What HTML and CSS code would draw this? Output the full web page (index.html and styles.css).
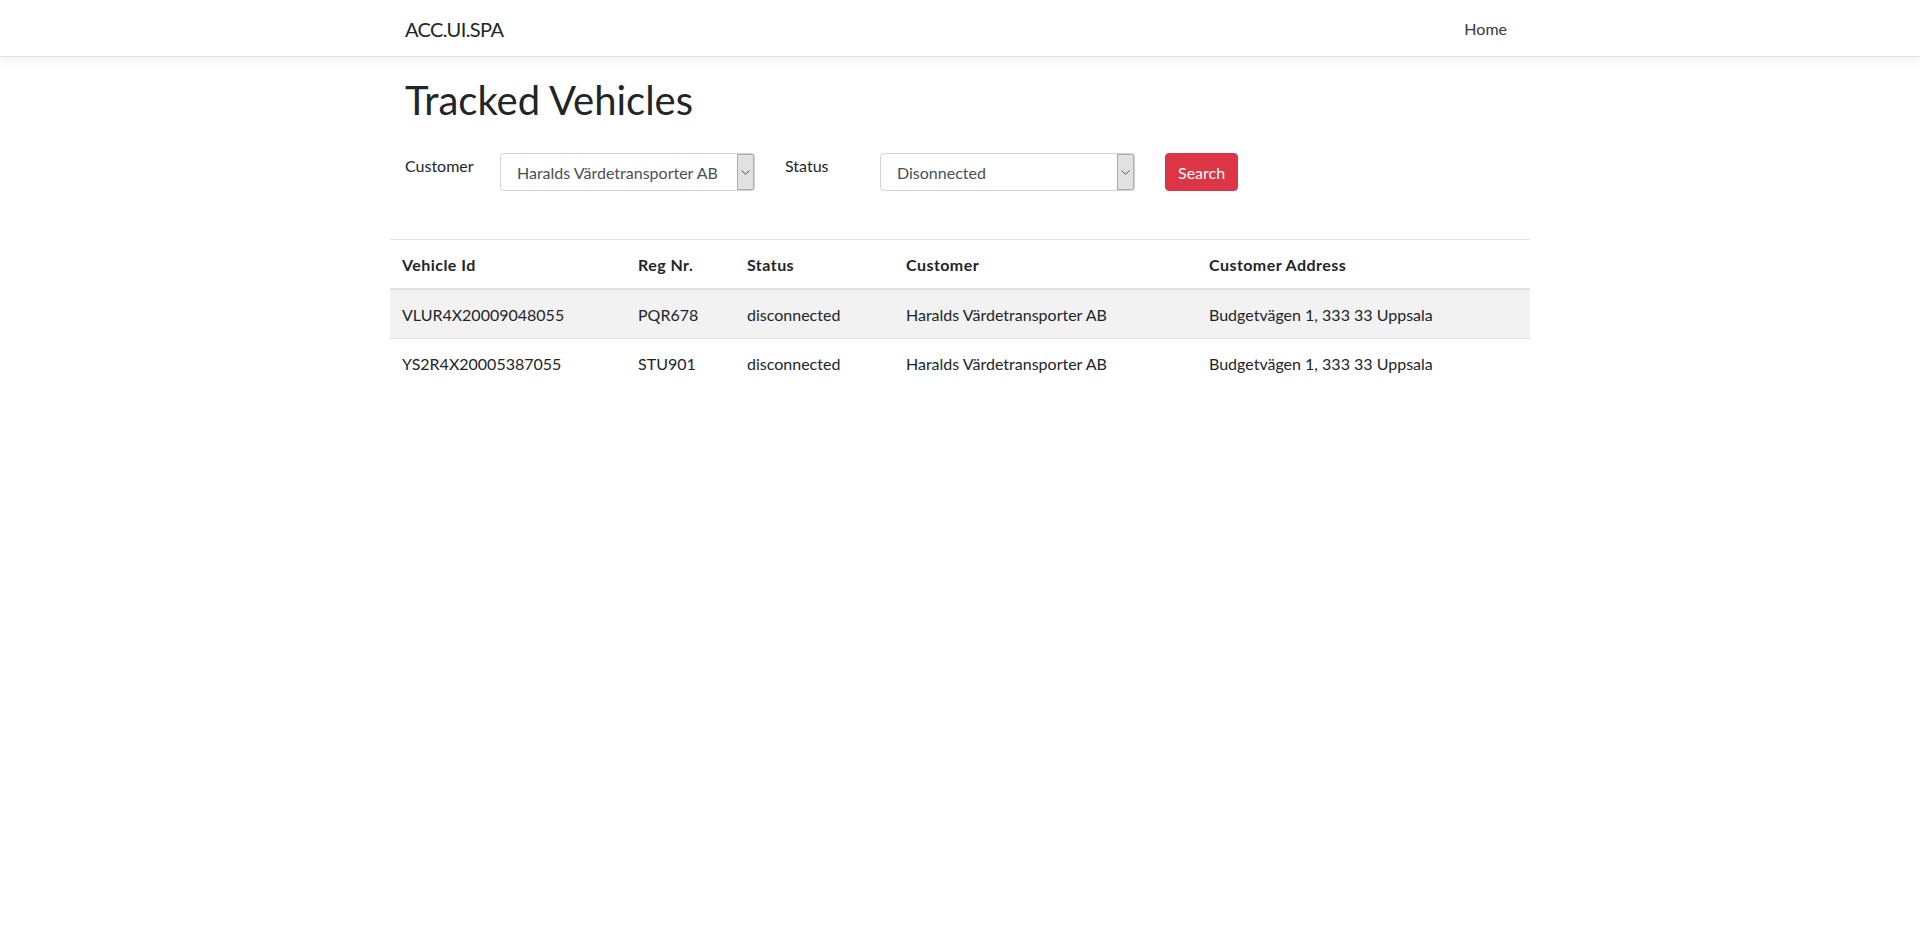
FILE: index.html
```html
<!DOCTYPE html>
<html lang="sv">
<head>
<meta charset="utf-8">
<title>Tracked Vehicles - ACC.UI.SPA</title>
<link rel="stylesheet" href="styles.css">
</head>
<body>
<header class="site-header">
  <nav class="navbar">
    <div class="navbar-inner">
      <a class="brand" href="#">ACC.UI.SPA</a>
      <ul class="nav">
        <li><a class="nav-link" href="#">Home</a></li>
      </ul>
    </div>
  </nav>
</header>
<main class="container">
  <h1 class="page-title">Tracked Vehicles</h1>
  <form class="filter-row">
    <div class="col-label"><label for="customer">Customer</label></div>
    <div class="col-select">
      <div class="select-wrap">
        <select id="customer" class="form-select">
          <option>Haralds Värdetransporter AB</option>
        </select>
        <span class="select-arrow"><svg width="9" height="5" viewBox="0 0 9 5"><path d="M0.5 0.5 L4.5 4.2 L8.5 0.5" fill="none" stroke="#555" stroke-width="1"/></svg></span>
      </div>
    </div>
    <div class="col-label"><label for="status">Status</label></div>
    <div class="col-select">
      <div class="select-wrap">
        <select id="status" class="form-select">
          <option>Disonnected</option>
        </select>
        <span class="select-arrow"><svg width="9" height="5" viewBox="0 0 9 5"><path d="M0.5 0.5 L4.5 4.2 L8.5 0.5" fill="none" stroke="#555" stroke-width="1"/></svg></span>
      </div>
    </div>
    <div class="col-btn"><button type="button" class="btn-danger">Search</button></div>
  </form>
  <div class="table-wrap">
    <table class="vehicle-table">
      <colgroup>
        <col class="c-id"><col class="c-reg"><col class="c-status"><col class="c-cust"><col class="c-addr">
      </colgroup>
      <thead>
        <tr><th>Vehicle Id</th><th>Reg Nr.</th><th>Status</th><th>Customer</th><th>Customer Address</th></tr>
      </thead>
      <tbody>
        <tr class="row-hover"><td>VLUR4X20009048055</td><td>PQR678</td><td>disconnected</td><td>Haralds Värdetransporter AB</td><td>Budgetvägen 1, 333 33 Uppsala</td></tr>
        <tr><td>YS2R4X20005387055</td><td>STU901</td><td>disconnected</td><td>Haralds Värdetransporter AB</td><td>Budgetvägen 1, 333 33 Uppsala</td></tr>
      </tbody>
    </table>
  </div>
</main>
</body>
</html>
```
FILE: styles.css
```css
* { box-sizing: border-box; }
html, body { margin: 0; padding: 0; }
body {
  font-family: Lato, "Open Sans", "Liberation Sans", sans-serif;
  font-size: 16px;
  line-height: 1.5;
  color: #212529;
  background: #fff;
}
a { text-decoration: none; }

.site-header { margin-bottom: 16px; }
.navbar {
  background: #fff;
  border-bottom: 1px solid #dee2e6;
  box-shadow: 0 4px 12px rgba(0,0,0,.05);
  padding: 8px 16px;
}
.navbar-inner {
  width: 1140px;
  margin: 0 auto;
  padding: 0 15px;
  display: flex;
  align-items: center;
  justify-content: space-between;
}
.brand {
  font-size: 20px;
  line-height: 30px;
  padding: 6px 0 4px;
  letter-spacing: -0.6px;
  color: #212529;
}
.nav { list-style: none; margin: 0; padding: 0; display: flex; }
.nav-link {
  display: block;
  padding: 9px 8px 7px;
  color: #343a40;
}

.container {
  width: 1140px;
  margin: 0 auto;
  padding: 0 15px;
}
.page-title {
  font-size: 40px;
  line-height: 48px;
  font-weight: 400;
  margin: 0 0 29px;
  padding-top: 3px;
}

.filter-row {
  display: flex;
  margin: 0 -15px 48px;
}
.col-label { width: 95px; padding: 0 15px; }
.col-select { width: 285px; padding: 0 15px; }
.col-btn { padding: 0 15px; }
.col-label label { display: inline-block; font-size: 16px; line-height: 24px; padding-top: 1px; }

.select-wrap { position: relative; height: 38px; }
.form-select {
  appearance: none;
  -webkit-appearance: none;
  width: 100%;
  height: 38px;
  border: 1px solid #ced4da;
  border-radius: 4px;
  background: #fff;
  color: #495057;
  font-family: inherit;
  font-size: 16px;
  padding: 6px 20px 6px 16px;
  outline: none;
}
.select-arrow {
  position: absolute;
  top: 1px;
  right: 1px;
  bottom: 1px;
  width: 17px;
  background: #e1e1e1;
  border: 1px solid #adadad;
  display: flex;
  align-items: center;
  justify-content: center;
}

.btn-danger {
  height: 38px;
  padding: 7px 12px 5px;
  font-family: inherit;
  font-size: 16px;
  line-height: 24px;
  color: #fff;
  background: #dc3545;
  border: 1px solid #dc3545;
  border-radius: 4px;
}

.table-wrap { margin: 0 -15px; }
.vehicle-table {
  width: 100%;
  border-collapse: collapse;
  table-layout: fixed;
}
.c-id { width: 236px; }
.c-reg { width: 109px; }
.c-status { width: 159px; }
.c-cust { width: 303px; }
.c-addr { width: auto; }
.vehicle-table th, .vehicle-table td {
  padding: 13px 12px 11px;
  text-align: left;
  vertical-align: top;
  border-top: 1px solid #dee2e6;
  line-height: 24px;
  white-space: nowrap;
}
.vehicle-table th { font-weight: 700; letter-spacing: 0.45px; }
.vehicle-table thead th { border-bottom: 2px solid #dee2e6; }
.row-hover td { background: rgba(0,0,0,.05); }
```
